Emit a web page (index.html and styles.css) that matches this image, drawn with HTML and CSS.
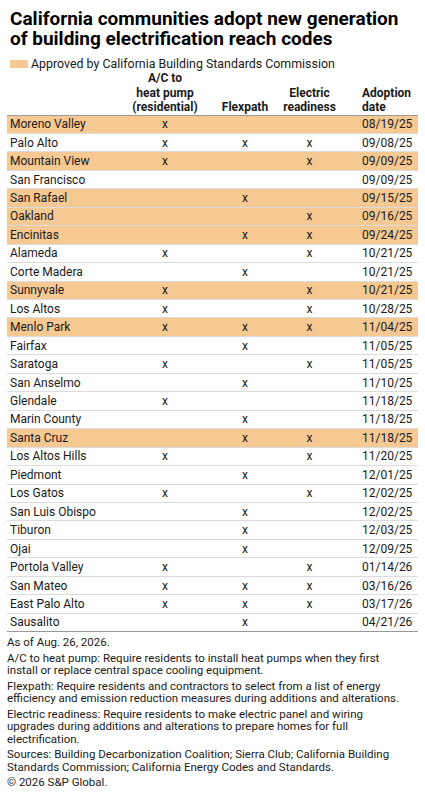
FILE: index.html
```html
<!DOCTYPE html>
<html lang="en">
<head>
    <meta charset="UTF-8">
    <title>California reach codes</title>
    <link rel="stylesheet" href="styles.css">
</head>
<body>
    <div class="chart">
        <h1 class="title">California communities adopt new generation of building electrification reach codes</h1>
        <div class="legend"><span class="swatch"></span>Approved by California Building Standards Commission</div>
        <table class="codes">
            <thead>
                <tr>
                    <th class="city"></th>
                    <th class="ac">A/C to<br>heat pump<br>(residential)</th>
                    <th class="flex">Flexpath</th>
                    <th class="elec">Electric<br>readiness</th>
                    <th class="date">Adoption<br>date</th>
                </tr>
            </thead>
            <tbody id="rows"></tbody>
        </table>
        <div class="notes">
            <p>As of Aug. 26, 2026.</p>
            <p>A/C to heat pump: Require residents to install heat pumps when they first install or replace central space cooling equipment.</p>
            <p>Flexpath: Require residents and contractors to select from a list of energy efficiency and emission reduction measures during additions and alterations.</p>
            <p>Electric readiness: Require residents to make electric panel and wiring upgrades during additions and alterations to prepare homes for full electrification.</p>
            <p>Sources: Building Decarbonization Coalition; Sierra Club; California Building Standards Commission; California Energy Codes and Standards.</p>
            <p>&copy; 2026 S&amp;P Global.</p>
        </div>
    </div>
    <script>
        // [city, ac, flex, electric, date, approved]
        const data = [
            ["Moreno Valley", 1, 0, 0, "08/19/25", 1],
            ["Palo Alto", 1, 1, 1, "09/08/25", 0],
            ["Mountain View", 1, 0, 1, "09/09/25", 1],
            ["San Francisco", 0, 0, 0, "09/09/25", 0],
            ["San Rafael", 0, 1, 0, "09/15/25", 1],
            ["Oakland", 0, 0, 1, "09/16/25", 1],
            ["Encinitas", 0, 1, 1, "09/24/25", 1],
            ["Alameda", 1, 0, 1, "10/21/25", 0],
            ["Corte Madera", 0, 1, 0, "10/21/25", 0],
            ["Sunnyvale", 1, 0, 1, "10/21/25", 1],
            ["Los Altos", 1, 0, 1, "10/28/25", 0],
            ["Menlo Park", 1, 1, 1, "11/04/25", 1],
            ["Fairfax", 0, 1, 0, "11/05/25", 0],
            ["Saratoga", 1, 0, 1, "11/05/25", 0],
            ["San Anselmo", 0, 1, 0, "11/10/25", 0],
            ["Glendale", 1, 0, 0, "11/18/25", 0],
            ["Marin County", 0, 1, 0, "11/18/25", 0],
            ["Santa Cruz", 0, 1, 1, "11/18/25", 1],
            ["Los Altos Hills", 1, 0, 1, "11/20/25", 0],
            ["Piedmont", 0, 1, 0, "12/01/25", 0],
            ["Los Gatos", 1, 0, 1, "12/02/25", 0],
            ["San Luis Obispo", 0, 1, 0, "12/02/25", 0],
            ["Tiburon", 0, 1, 0, "12/03/25", 0],
            ["Ojai", 0, 1, 0, "12/09/25", 0],
            ["Portola Valley", 1, 0, 1, "01/14/26", 0],
            ["San Mateo", 1, 1, 1, "03/16/26", 0],
            ["East Palo Alto", 1, 1, 1, "03/17/26", 0],
            ["Sausalito", 0, 1, 0, "04/21/26", 0]
        ];

        const tbody = document.getElementById('rows');
        const classes = ['city', 'ac', 'flex', 'elec', 'date'];
        data.forEach(row => {
            const tr = document.createElement('tr');
            if (row[5]) tr.className = 'approved';
            const cells = [row[0], row[1] ? 'x' : '', row[2] ? 'x' : '', row[3] ? 'x' : '', row[4]];
            cells.forEach((text, i) => {
                const td = document.createElement('td');
                td.className = classes[i];
                td.textContent = text;
                tr.appendChild(td);
            });
            tbody.appendChild(tr);
        });
    </script>
</body>
</html>
```

FILE: styles.css
```css
body { margin: 0; font-family: Roboto, "Liberation Sans", sans-serif; color: #1a1a1a; background: #fff; }
.chart { padding: 9px 7px 0 7px; }
.title {
    margin: 0 0 0 3px; font-size: 19px; line-height: 20px; font-weight: bold; color: #000;
}
.legend {
    display: flex; align-items: center; font-size: 12.4px; line-height: 12px; margin: 9px 0 0 3px;
}
.swatch { width: 18px; height: 8px; background: #f6c993; margin-right: 3px; }
.codes { width: 411px; table-layout: fixed; border-collapse: collapse; font-size: 12px; margin-top: 1px; }
.codes th, .codes td { box-sizing: border-box; padding: 0; }
.codes th {
    font-weight: bold; line-height: 14.5px; vertical-align: bottom;
    border-bottom: 1px solid #999;
}
.codes td { height: 18.46px; border-bottom: 1px solid #dcdcdc; }
.codes tbody tr:last-child td { border-bottom: 1px solid #999; }
.codes tr.approved td { background: #f6c993; }
.codes .city { width: 123px; padding-left: 3px; text-align: left; }
.codes .ac { width: 70px; text-align: center; }
.codes .flex { width: 80px; padding-left: 10px; text-align: center; }
.codes .elec { width: 75px; padding-right: 16px; text-align: center; }
.codes .date { width: 63px; padding-left: 7px; text-align: left; }
.notes { width: 400px; font-size: 11.5px; line-height: 12.5px; margin-top: 4px; }
.notes p { margin: 0 0 3px 0; }
```
